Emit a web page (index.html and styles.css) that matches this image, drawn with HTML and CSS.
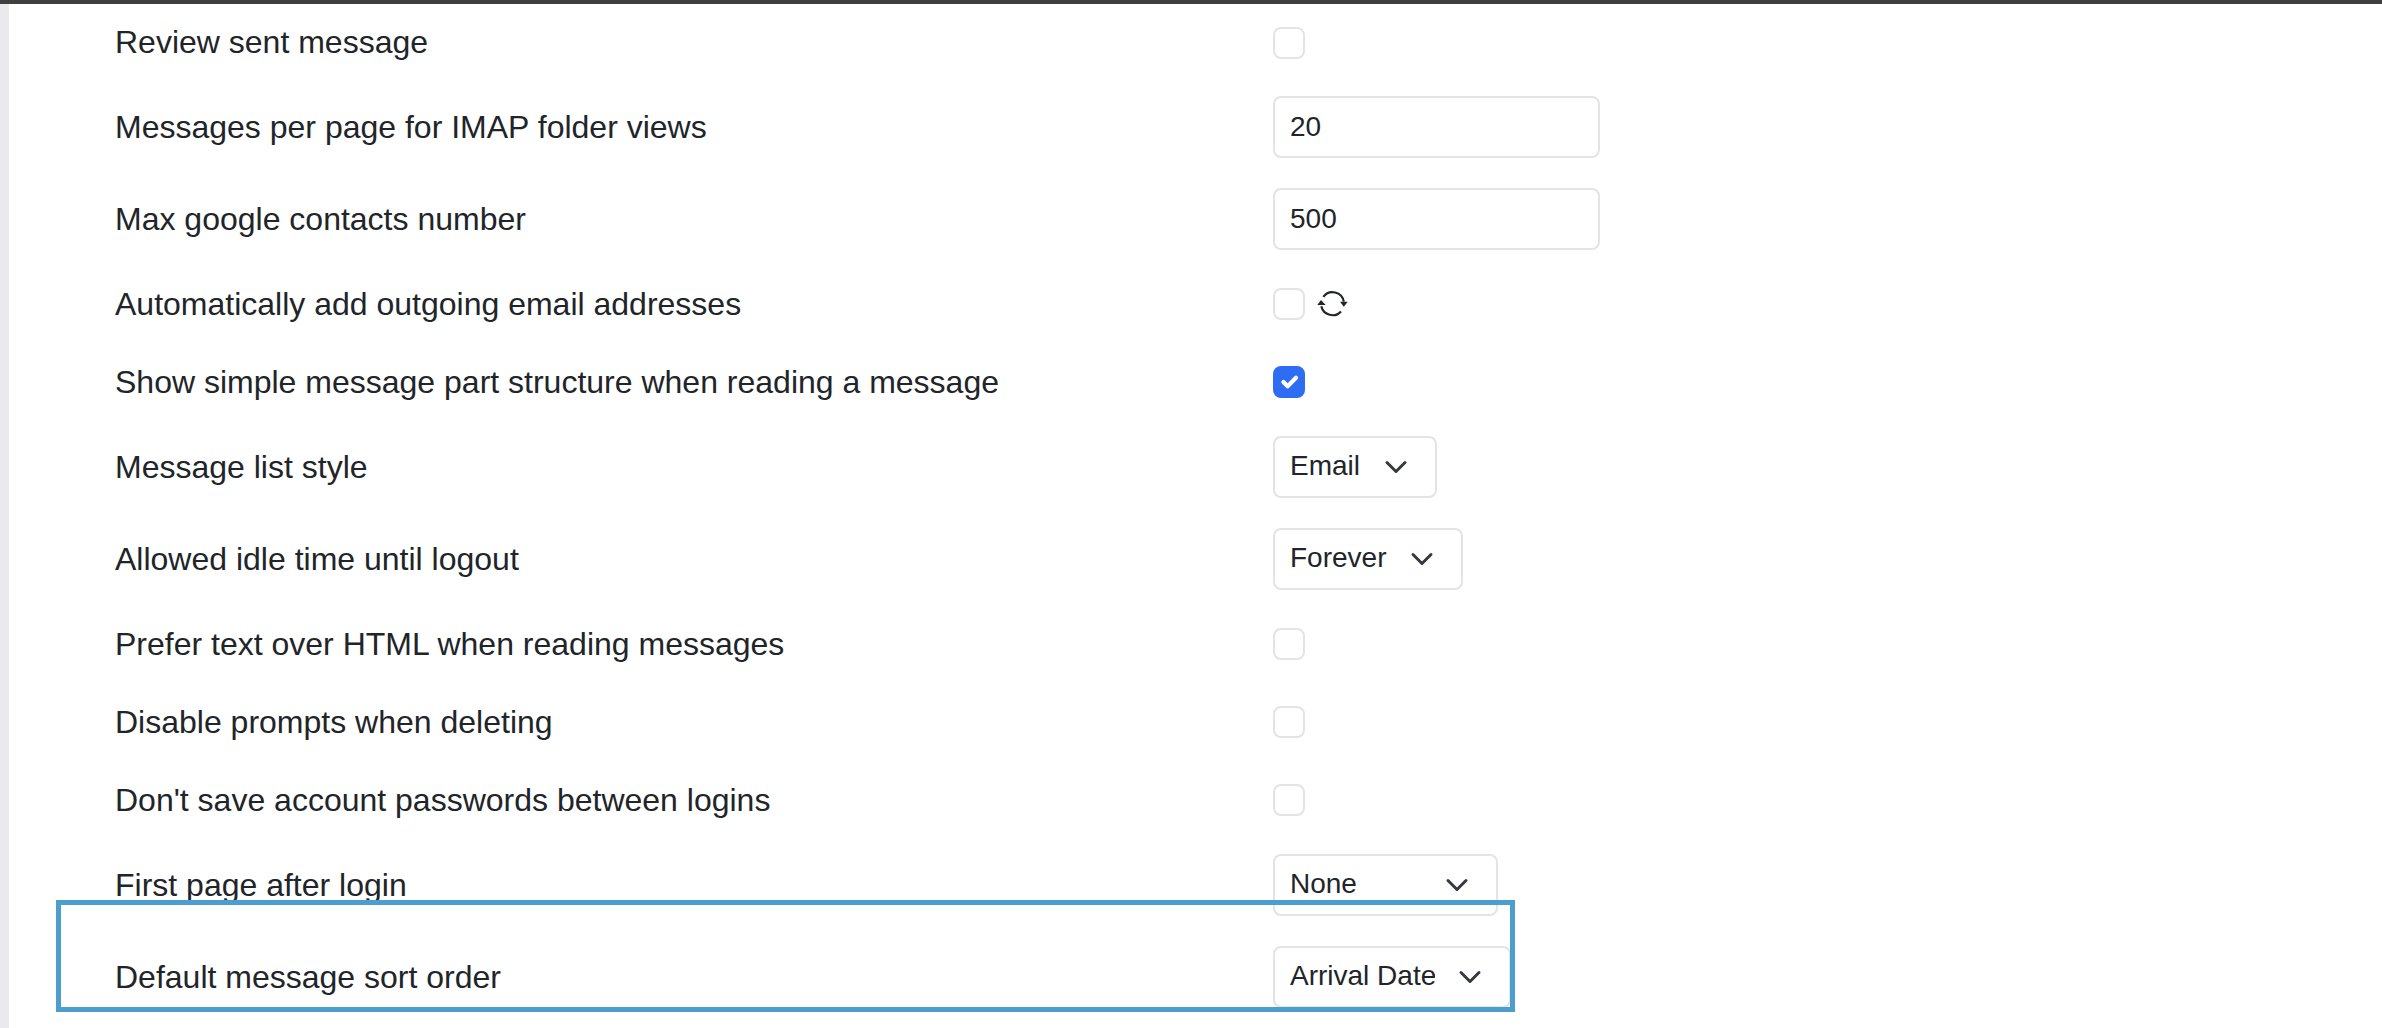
FILE: index.html
```html
<!DOCTYPE html>
<html lang="en">
<head>
<meta charset="UTF-8">
<meta name="viewport" content="width=device-width, initial-scale=1.0">
<title>Settings</title>
<link rel="stylesheet" href="styles.css">
</head>
<body>

<div class="top-bar"></div>

<div class="settings">
  <div class="row row-first">
    <label class="label">Review sent message</label>
    <div class="field"><input type="checkbox" class="check"></div>
  </div>
  <div class="row row-tall">
    <label class="label">Messages per page for IMAP folder views</label>
    <div class="field"><input type="text" class="text-input" value="20"></div>
  </div>
  <div class="row row-tall">
    <label class="label">Max google contacts number</label>
    <div class="field"><input type="text" class="text-input" value="500"></div>
  </div>
  <div class="row">
    <label class="label">Automatically add outgoing email addresses</label>
    <div class="field">
      <input type="checkbox" class="check">
      <svg class="refresh" width="31" height="26" viewBox="0 0 31 26">
        <path d="M6.3 5.8A11.5 11.5 0 0 1 26.8 10.6" fill="none" stroke="#212529" stroke-width="2.2"/>
        <path d="M4.3 15.3A11.5 11.5 0 0 0 24 20.4" fill="none" stroke="#212529" stroke-width="2.2"/>
        <path d="M4 9L.3 14H8.7ZM23 10.7H30.7L26.8 15.7Z" fill="#212529"/>
      </svg>
    </div>
  </div>
  <div class="row">
    <label class="label">Show simple message part structure when reading a message</label>
    <div class="field"><input type="checkbox" class="check" checked></div>
  </div>
  <div class="row row-tall">
    <label class="label">Message list style</label>
    <div class="field">
      <select class="select"><option>Email</option></select>
    </div>
  </div>
  <div class="row row-tall">
    <label class="label">Allowed idle time until logout</label>
    <div class="field">
      <select class="select"><option>Forever</option></select>
    </div>
  </div>
  <div class="row">
    <label class="label">Prefer text over HTML when reading messages</label>
    <div class="field"><input type="checkbox" class="check"></div>
  </div>
  <div class="row">
    <label class="label">Disable prompts when deleting</label>
    <div class="field"><input type="checkbox" class="check"></div>
  </div>
  <div class="row">
    <label class="label">Don't save account passwords between logins</label>
    <div class="field"><input type="checkbox" class="check"></div>
  </div>
  <div class="row row-tall">
    <label class="label">First page after login</label>
    <div class="field">
      <select class="select select-wide"><option>None</option></select>
    </div>
  </div>
  <div class="row row-tall">
    <label class="label">Default message sort order</label>
    <div class="field">
      <select class="select select-date"><option>Arrival Date</option></select>
    </div>
  </div>
</div>

<div class="highlight"></div>

</body>
</html>
```

FILE: styles.css
```css
html, body {
  margin: 0;
  height: 100%;
  overflow: hidden;
  background-color: #fff;
}
body {
  position: relative;
  font-family: "Liberation Sans", Arial, sans-serif;
  color: #212529;
}
.top-bar {
  height: 4px;
  background-color: #3f3f3f;
}
.settings {
  border-left: 9px solid #e9e9ee;
  padding-left: 106px;
  height: 1024px;
}
.row {
  display: flex;
  align-items: center;
  height: 78px;
}
.row-first {
  height: 77px;
}
.row-tall {
  height: 92px;
}
.label {
  width: 1158px;
  flex-shrink: 0;
  font-size: 32px;
}
.field {
  display: flex;
  align-items: center;
}
.check {
  appearance: none;
  box-sizing: border-box;
  width: 32px;
  height: 32px;
  margin: 0;
  border: 2px solid #e2e4e6;
  border-radius: 8px;
  background-color: #fff;
}
.check:checked {
  border-color: #2f6cf4;
  background-color: #2f6cf4;
  background-size: 100%;
  background-position: center;
  background-image: url("data:image/svg+xml,%3csvg xmlns='http://www.w3.org/2000/svg' viewBox='0 0 20 20'%3e%3cpath fill='none' stroke='%23fff' stroke-linecap='round' stroke-linejoin='round' stroke-width='3' d='M6 10l3 3l6-6'/%3e%3c/svg%3e");
}
.refresh {
  margin-left: 12px;
}
.text-input {
  box-sizing: border-box;
  width: 327px;
  height: 62px;
  padding: 0 15px;
  border: 2px solid #e2e4e6;
  border-radius: 8px;
  font-family: inherit;
  font-size: 28px;
  color: #212529;
  outline: none;
}
.select {
  appearance: none;
  box-sizing: border-box;
  height: 62px;
  padding: 0 74px 3px 15px;
  border: 2px solid #e2e4e6;
  border-radius: 8px;
  font-family: inherit;
  font-size: 28px;
  color: #212529;
  background-color: #fff;
  background-repeat: no-repeat;
  background-position: right 27.5px center;
  background-size: 24px;
  background-image: url("data:image/svg+xml,%3csvg xmlns='http://www.w3.org/2000/svg' viewBox='0 0 16 16'%3e%3cpath fill='none' stroke='%23343a40' stroke-linecap='round' stroke-linejoin='round' stroke-width='2' d='m2 5 6 6 6-6'/%3e%3c/svg%3e");
}
.select-wide {
  width: 225px;
}
.select-date {
  width: 238px;
}
.highlight {
  position: absolute;
  box-sizing: border-box;
  left: 56px;
  top: 900px;
  width: 1459px;
  height: 112px;
  border: 5px solid #4c9fcd;
}
```
